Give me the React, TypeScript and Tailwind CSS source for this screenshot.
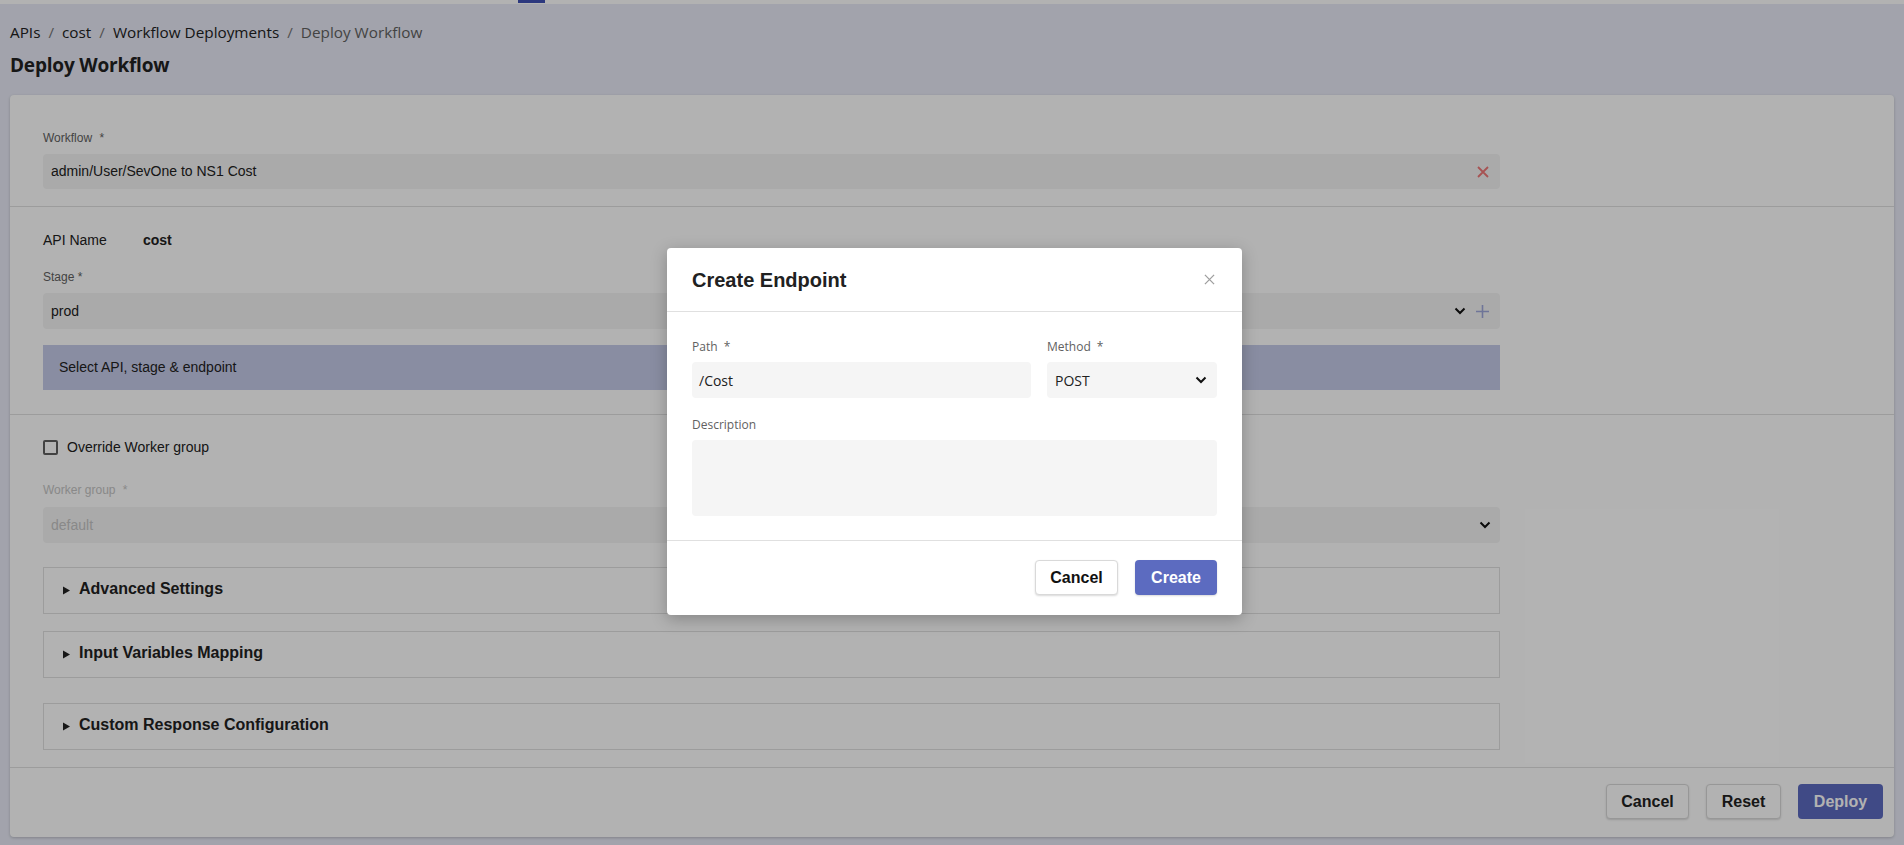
const Chevron = ({ className }: { className?: string }) => (
  <svg width="12" height="8" viewBox="0 0 12 8" className={className}>
    <path d="M1.5 1.5 6 6l4.5-4.5" fill="none" stroke="currentColor" strokeWidth="2" />
  </svg>
);

const Cross = ({ size, width, className }: { size: number; width: number; className?: string }) => (
  <svg width={size} height={size} viewBox="0 0 12 12" className={className}>
    <path d="M1 1l10 10M11 1 1 11" fill="none" stroke="currentColor" strokeWidth={width} />
  </svg>
);

const Caret = () => (
  <svg width="7" height="9" viewBox="0 0 7 9" className="mt-[2px] shrink-0">
    <path d="M0 0.5 7 4.5 0 8.5z" fill="#212121" />
  </svg>
);

const Accordion = ({ title, className }: { title: string; className?: string }) => (
  <div
    className={`flex h-[47px] items-center gap-[9px] border border-[#e0e0e0] pb-[3px] pl-[19px] ${className ?? ""}`}
  >
    <Caret />
    <span className="text-[16px] font-bold text-[#212121]">{title}</span>
  </div>
);

export default function App() {
  return (
    <div className="relative h-[845px] overflow-hidden bg-[#e8eaf6] font-['Liberation_Sans',Arial,sans-serif] text-[#212121]">
      {/* top nav edge */}
      <div className="h-[4px] bg-white">
        <div className="ml-[518px] h-[3px] w-[27px] bg-[#3f51b5]" />
      </div>

      <div className="pl-[10px] pt-[18px] font-['Open_Sans',sans-serif] text-[15.3px] leading-[20px]">
        <span>APIs</span>
        <span className="mx-[8px] text-[#757575]">/</span>
        <span>cost</span>
        <span className="mx-[8px] text-[#757575]">/</span>
        <span>Workflow Deployments</span>
        <span className="mx-[8px] text-[#757575]">/</span>
        <span className="text-[#616161]">Deploy Workflow</span>
      </div>
      <h1 className="mt-[10px] pl-[10px] font-['Open_Sans',sans-serif] text-[19px] font-bold leading-[26px] tracking-[-0.2px]">
        Deploy Workflow
      </h1>

      <div className="mx-[10px] mt-[17px] h-[742px] rounded-[4px] bg-white shadow-[0_1px_3px_rgba(0,0,0,0.2)]">
        {/* workflow */}
        <section className="border-b border-[#e0e0e0] px-[33px] pb-[17px] pt-[35px]">
          <div className="w-[1457px]">
            <div className="text-[12px] leading-[16px] text-[#616161]">
              Workflow <span className="ml-[4px]">*</span>
            </div>
            <div className="mt-[8px] flex h-[35px] items-center justify-between rounded-[4px] bg-[#f4f4f4] pl-[8px] pr-[11px] text-[14px]">
              <span>admin/User/SevOne to NS1 Cost</span>
              <Cross size={12} width={1.8} className="text-[#f07878]" />
            </div>
          </div>
        </section>

        {/* api / stage */}
        <section className="border-b border-[#e0e0e0] px-[33px] pb-[24px] pt-[23px]">
          <div className="w-[1457px]">
            <div className="flex h-[20px] items-center text-[14px]">
              <span className="w-[100px]">API Name</span>
              <span className="font-bold">cost</span>
            </div>
            <div className="mt-[19px] text-[12px] leading-[16px] text-[#616161]">Stage *</div>
            <div className="mt-[8px] flex h-[36px] items-center justify-between rounded-[4px] bg-[#f4f4f4] pl-[8px] pr-[11px] text-[14px]">
              <span>prod</span>
              <div className="flex items-center gap-[10px]">
                <Chevron className="text-[#111]" />
                <svg width="13" height="13" viewBox="0 0 13 13">
                  <path d="M6.5 0v13M0 6.5h13" stroke="#9fa8da" strokeWidth="1.6" />
                </svg>
              </div>
            </div>
            <div className="mt-[16px] flex h-[45px] items-center bg-[#c5cae9] pl-[16px] text-[14px]">
              Select API, stage &amp; endpoint
            </div>
          </div>
        </section>

        {/* worker group + accordions */}
        <section className="border-b border-[#e0e0e0] px-[33px] pb-[17px] pt-[22px]">
          <div className="w-[1457px]">
            <label className="flex h-[20px] items-center gap-[9px] text-[14px]">
              <span className="h-[15px] w-[15px] rounded-[2px] border-2 border-[#5f5f5f]" />
              Override Worker group
            </label>
            <div className="mt-[25px] text-[12px] leading-[16px] text-[#c4c4c4]">
              Worker group <span className="ml-[4px]">*</span>
            </div>
            <div className="mt-[9px] flex h-[36px] items-center justify-between rounded-[4px] bg-[#f4f4f4] pl-[8px] pr-[9px] text-[14px] text-[#c4c4c4]">
              <span>default</span>
              <Chevron className="text-[#111]" />
            </div>
            <Accordion title="Advanced Settings" className="mt-[24px]" />
            <Accordion title="Input Variables Mapping" className="mt-[17px]" />
            <Accordion title="Custom Response Configuration" className="mt-[25px]" />
          </div>
        </section>

        <div className="flex justify-end gap-[17px] pr-[11px] pt-[16px]">
          <button className="h-[35px] w-[83px] rounded-[4px] border border-[#d9d9d9] bg-white text-[16px] font-bold shadow-[0_1px_2px_rgba(0,0,0,0.15)]">
            Cancel
          </button>
          <button className="h-[35px] w-[75px] rounded-[4px] border border-[#d9d9d9] bg-white text-[16px] font-bold shadow-[0_1px_2px_rgba(0,0,0,0.15)]">
            Reset
          </button>
          <button className="h-[35px] w-[85px] rounded-[4px] bg-[#5c6bc0] text-[16px] font-bold text-white">
            Deploy
          </button>
        </div>
      </div>

      {/* modal overlay */}
      <div className="absolute inset-0 flex items-center justify-center bg-black/30 pl-[5px] pt-[18px]">
        <div className="w-[575px] rounded-[4px] bg-white shadow-[0_4px_16px_rgba(0,0,0,0.25)]">
          <div className="flex h-[64px] items-center justify-between border-b border-[#e0e0e0] pl-[25px] pr-[27px]">
            <h2 className="text-[20px] font-bold text-[#212121]">Create Endpoint</h2>
            <Cross size={11} width={1.4} className="text-[#9e9e9e]" />
          </div>
          <div className="px-[25px] pb-[24px] pt-[27px] font-['Open_Sans',sans-serif]">
            <div className="flex gap-[16px]">
              <div className="flex-1">
                <div className="text-[12px] leading-[16px] text-[#616161]">
                  Path <span className="ml-[3px]">*</span>
                </div>
                <div className="mt-[7px] flex h-[36px] items-center rounded-[4px] bg-[#f5f5f5] pl-[7px] text-[14px]">
                  /Cost
                </div>
              </div>
              <div className="w-[170px]">
                <div className="text-[12px] leading-[16px] text-[#616161]">
                  Method <span className="ml-[3px]">*</span>
                </div>
                <div className="mt-[7px] flex h-[36px] items-center justify-between rounded-[4px] bg-[#f5f5f5] pl-[8px] pr-[10px] text-[14px]">
                  <span>POST</span>
                  <Chevron className="text-[#111]" />
                </div>
              </div>
            </div>
            <div className="mt-[19px] text-[12px] leading-[16px] text-[#616161]">Description</div>
            <div className="mt-[7px] h-[76px] rounded-[4px] bg-[#f5f5f5]" />
          </div>
          <div className="flex justify-end gap-[17px] border-t border-[#e0e0e0] pb-[20px] pr-[25px] pt-[19px]">
            <button className="h-[35px] w-[83px] rounded-[4px] border border-[#d9d9d9] bg-white text-[16px] font-bold text-[#111] shadow-[0_1px_2px_rgba(0,0,0,0.15)]">
              Cancel
            </button>
            <button className="h-[35px] w-[82px] rounded-[4px] bg-[#5c6bc0] text-[16px] font-bold text-white shadow-[0_1px_2px_rgba(0,0,0,0.15)]">
              Create
            </button>
          </div>
        </div>
      </div>
    </div>
  );
}
